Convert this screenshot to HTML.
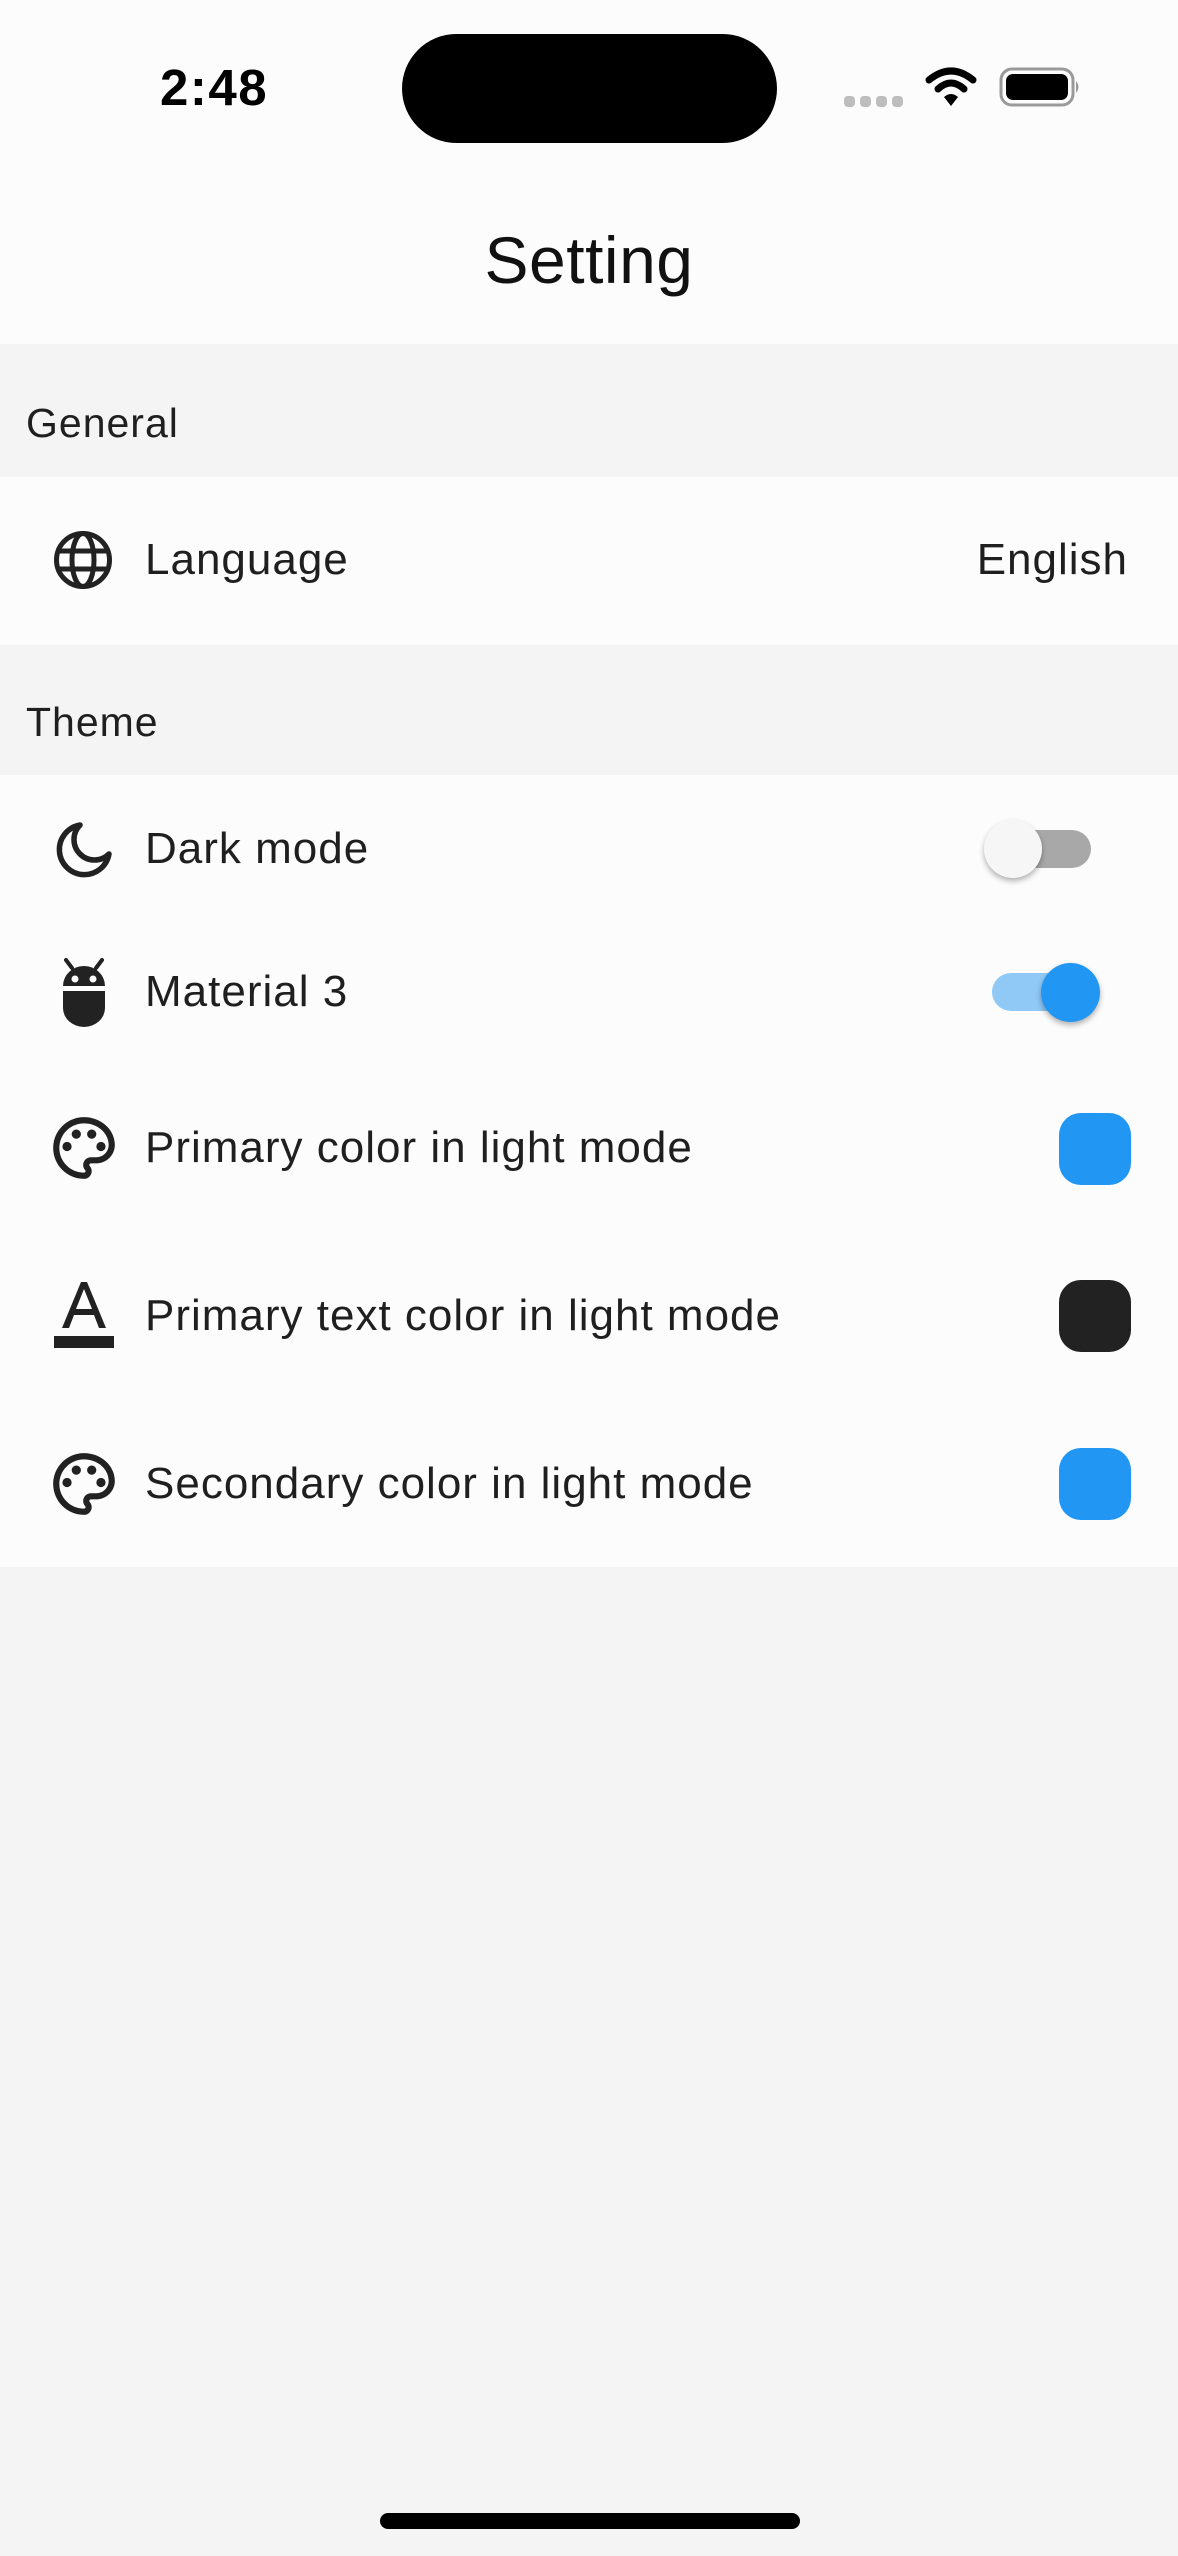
<!DOCTYPE html>
<html><head><meta charset="utf-8"><style>
*{margin:0;padding:0;box-sizing:border-box}
body{width:1178px;height:2556px;background:#f4f4f4;font-family:"Liberation Sans",sans-serif;color:#1f1f1f;position:relative;overflow:hidden}
.abs{position:absolute}
.top{left:0;top:0;width:1178px;height:344px;background:#fcfcfc}
.rows{background:#fcfcfc;left:0;width:1178px}
.t{position:absolute;font-size:44px;letter-spacing:1px;line-height:50px;white-space:nowrap}
.h{position:absolute;left:26px;font-size:41px;letter-spacing:1px;line-height:50px}
.ic{position:absolute}
.sq{position:absolute;left:1059px;width:72px;height:72px;border-radius:22px}
</style></head><body>
<div class="abs top"></div>
<div class="abs" style="left:160px;top:58px;font-size:51px;font-weight:bold;color:#000;line-height:60px;letter-spacing:1.5px">2:48</div>
<div class="abs" style="left:402px;top:34px;width:375px;height:109px;border-radius:55px;background:#000"></div>
<svg class="abs" style="left:844px;top:94px" width="62" height="14"><g fill="#bdbdbd"><rect x="0" y="2" width="11" height="11" rx="4"/><rect x="16" y="2" width="11" height="11" rx="4"/><rect x="32" y="2" width="11" height="11" rx="4"/><rect x="48" y="2" width="11" height="11" rx="4"/></g></svg>
<svg class="abs" style="left:925px;top:66px" width="52" height="42" viewBox="0 0 52 42"><g fill="none" stroke="#000" stroke-width="7" stroke-linecap="round"><path d="M4 14 Q26 -4 48 14"/><path d="M13 23 Q26 11 39 23"/></g><path d="M19 31 Q26 25 33 31 L26 40 Z" fill="#000"/></svg>
<svg class="abs" style="left:999px;top:66px" width="84" height="42" viewBox="0 0 84 42"><rect x="2" y="3" width="72" height="36" rx="11" fill="none" stroke="#9a9a9a" stroke-width="3"/><rect x="7" y="8" width="62" height="26" rx="7" fill="#000"/><path d="M77 15 q5 6 0 12" fill="#9a9a9a"/></svg>
<div class="abs" style="left:0;width:1178px;text-align:center;top:220px;font-size:66px;letter-spacing:0.5px;line-height:80px;color:#111">Setting</div>

<div class="h" style="top:398px">General</div>
<div class="abs rows" style="top:477px;height:168px"></div>
<svg class="ic" style="left:53px;top:530px" width="60" height="60" viewBox="0 0 60 60"><g fill="none" stroke="#222" stroke-width="5"><circle cx="30" cy="30" r="26.5"/><ellipse cx="30" cy="30" rx="11" ry="26.5"/><line x1="3" y1="21" x2="57" y2="21"/><line x1="3" y1="39" x2="57" y2="39"/></g></svg>
<div class="t" style="left:145px;top:535px">Language</div>
<div class="t" style="right:50px;top:535px">English</div>

<div class="h" style="top:697px">Theme</div>
<div class="abs rows" style="top:775px;height:792px"></div>

<svg class="ic" style="left:54px;top:820px" width="60" height="60" viewBox="0 0 60 60"><path d="M26 5 A25 25 0 1 0 55 34 A20 20 0 0 1 26 5 Z" fill="none" stroke="#222" stroke-width="5.5" stroke-linejoin="round"/></svg>
<div class="t" style="left:145px;top:824px">Dark mode</div>
<div class="abs" style="left:994px;top:830px;width:97px;height:38px;border-radius:19px;background:#a8a8a8"></div>
<div class="abs" style="left:984px;top:820px;width:58px;height:58px;border-radius:50%;background:#f6f6f6;box-shadow:0 3px 6px rgba(0,0,0,.3)"></div>

<svg class="ic" style="left:60px;top:958px" width="48" height="70" viewBox="0 0 48 70"><g stroke="#222" stroke-width="4" stroke-linecap="round"><line x1="6" y1="2" x2="12" y2="10"/><line x1="42" y1="2" x2="36" y2="10"/></g><path d="M3 28 A21 20 0 0 1 45 28 Z" fill="#222"/><path d="M3 33 H45 V50 A21 19 0 0 1 3 50 Z" fill="#222"/><circle cx="15" cy="21" r="3.5" fill="#fcfcfc"/><circle cx="33" cy="21" r="3.5" fill="#fcfcfc"/></svg>
<div class="t" style="left:145px;top:967px">Material 3</div>
<div class="abs" style="left:992px;top:973px;width:97px;height:38px;border-radius:19px;background:#90c8f6"></div>
<div class="abs" style="left:1041px;top:963px;width:59px;height:59px;border-radius:50%;background:#2196f3;box-shadow:0 3px 6px rgba(0,0,0,.3)"></div>

<svg class="ic" style="left:47px;top:1111px" width="74" height="74" viewBox="0 0 24 24"><path fill="#222" d="M12 22C6.49 22 2 17.51 2 12S6.490 2 12 2s10 4.04 10 9c0 3.31-2.69 6-6 6h-1.77c-.28 0-.5.22-.5.5 0 .12.05.23.13.33.41.47.64 1.06.64 1.67A2.5 2.5 0 0 1 12 22zm0-18c-4.41 0-8 3.59-8 8s3.59 8 8 8c.28 0 .5-.22.5-.5a.54.54 0 0 0-.14-.35c-.41-.46-.63-1.05-.63-1.65a2.5 2.5 0 0 1 2.5-2.5H16c2.21 0 4-1.79 4-4 0-3.86-3.59-7-8-7z"/><circle fill="#222" cx="6.5" cy="11.5" r="1.5"/><circle fill="#222" cx="9.5" cy="7.5" r="1.5"/><circle fill="#222" cx="14.5" cy="7.5" r="1.5"/><circle fill="#222" cx="17.5" cy="11.5" r="1.5"/></svg>
<div class="t" style="left:145px;top:1123px">Primary color in light mode</div>
<div class="sq" style="top:1113px;background:#2196f3"></div>

<svg class="ic" style="left:54px;top:1280px" width="60" height="72" viewBox="0 0 60 72"><path d="M8 48 L27 2 H33 L52 48 H45 L40 35 H20 L15 48 Z M22 29 H38 L30 9 Z" fill="#222"/><rect x="0" y="56" width="60" height="12" fill="#222"/></svg>
<div class="t" style="left:145px;top:1291px">Primary text color in light mode</div>
<div class="sq" style="top:1280px;background:#222"></div>

<svg class="ic" style="left:47px;top:1447px" width="74" height="74" viewBox="0 0 24 24"><path fill="#222" d="M12 22C6.49 22 2 17.51 2 12S6.49 2 12 2s10 4.04 10 9c0 3.31-2.69 6-6 6h-1.77c-.28 0-.5.22-.5.5 0 .12.05.23.13.33.41.47.64 1.06.64 1.67A2.5 2.5 0 0 1 12 22zm0-18c-4.41 0-8 3.59-8 8s3.59 8 8 8c.28 0 .5-.22.5-.5a.54.54 0 0 0-.14-.35c-.41-.46-.63-1.05-.63-1.65a2.5 2.5 0 0 1 2.5-2.5H16c2.21 0 4-1.79 4-4 0-3.86-3.59-7-8-7z"/><circle fill="#222" cx="6.5" cy="11.5" r="1.5"/><circle fill="#222" cx="9.5" cy="7.5" r="1.5"/><circle fill="#222" cx="14.5" cy="7.5" r="1.5"/><circle fill="#222" cx="17.5" cy="11.5" r="1.5"/></svg>
<div class="t" style="left:145px;top:1459px">Secondary color in light mode</div>
<div class="sq" style="top:1448px;background:#2196f3"></div>

<div class="abs" style="left:380px;top:2513px;width:420px;height:16px;border-radius:8px;background:#000"></div>
</body></html>
